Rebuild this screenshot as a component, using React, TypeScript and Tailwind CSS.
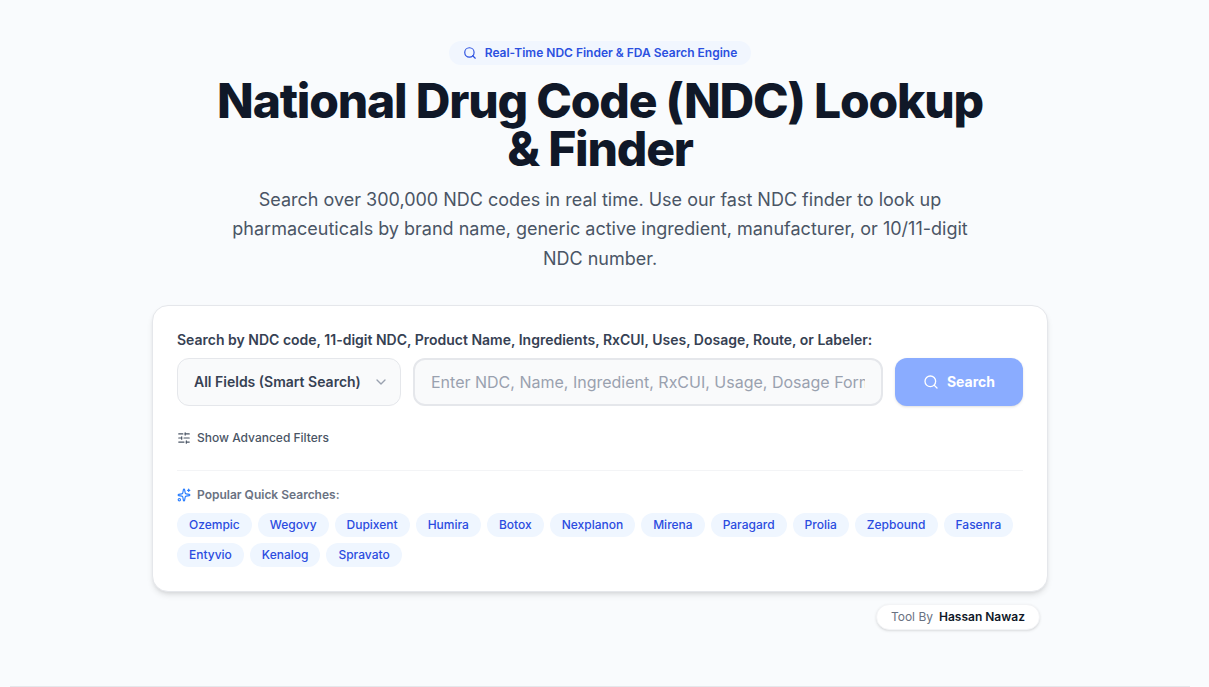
import { useState } from "react";
import { ChevronDown, Search, SlidersHorizontal, Sparkles } from "lucide-react";

const quickSearches = [
  "Ozempic",
  "Wegovy",
  "Dupixent",
  "Humira",
  "Botox",
  "Nexplanon",
  "Mirena",
  "Paragard",
  "Prolia",
  "Zepbound",
  "Fasenra",
  "Entyvio",
  "Kenalog",
  "Spravato",
];

function Hero() {
  return (
    <header className="flex flex-col items-center text-center">
      <p className="inline-flex items-center gap-2 rounded-full bg-[#f1f6fe] px-3.5 py-1 text-xs font-semibold text-[#2b50e0]">
        <Search className="size-3.5" aria-hidden="true" />
        Real-Time NDC Finder &amp; FDA Search Engine
      </p>
      <h1 className="mt-3 max-w-3xl text-5xl leading-none font-extrabold tracking-tight text-[#101828]">
        National Drug Code (NDC) Lookup &amp; Finder
      </h1>
      <p className="mt-3 max-w-3xl text-lg leading-relaxed text-[#4a5565]">
        Search over 300,000 NDC codes in real time. Use our fast NDC finder to look up pharmaceuticals by
        brand name, generic active ingredient, manufacturer, or 10/11-digit NDC number.
      </p>
    </header>
  );
}

function SearchCard() {
  const [query, setQuery] = useState("");
  return (
    <section className="w-full rounded-2xl border border-gray-200 bg-white p-6 shadow-md">
      <form onSubmit={(e) => e.preventDefault()}>
        <label htmlFor="query" className="block text-sm font-semibold text-[#364153]">
          Search by NDC code, 11-digit NDC, Product Name, Ingredients, RxCUI, Uses, Dosage, Route, or Labeler:
        </label>
        <div className="mt-2 flex flex-col gap-3 md:flex-row">
          <div className="relative md:w-56">
            <select
              aria-label="Search field"
              className="h-12 w-full appearance-none rounded-xl border border-gray-200 bg-[#f9fafb] pr-9 pl-4 text-sm font-semibold text-[#364153]"
            >
              <option>All Fields (Smart Search)</option>
              <option>NDC Code</option>
              <option>Product Name</option>
            </select>
            <ChevronDown
              className="pointer-events-none absolute top-4 right-3 size-4 text-gray-400"
              aria-hidden="true"
            />
          </div>
          <input
            id="query"
            type="text"
            value={query}
            onChange={(e) => setQuery(e.target.value)}
            placeholder="Enter NDC, Name, Ingredient, RxCUI, Usage, Dosage Form..."
            className="h-12 min-w-0 flex-1 rounded-xl border-2 border-gray-200 bg-[#f9fafb] px-4 text-base text-gray-900 placeholder:text-[#99a1af]"
          />
          <button
            type="submit"
            className="flex h-12 items-center justify-center gap-2 rounded-xl bg-[#8aacff] text-sm font-bold text-white shadow-sm md:w-32"
          >
            <Search className="size-4" aria-hidden="true" />
            Search
          </button>
        </div>
        <button type="button" className="mt-6 flex items-center gap-1.5 text-xs font-medium text-[#4a5565]">
          <SlidersHorizontal className="size-3.5" aria-hidden="true" />
          Show Advanced Filters
        </button>
      </form>
      <div className="mt-6 border-t border-gray-100 pt-4">
        <h2 className="flex items-center gap-1.5 text-xs font-semibold text-[#6a7282]">
          <Sparkles className="size-3.5 text-[#2b7fff]" aria-hidden="true" />
          Popular Quick Searches:
        </h2>
        <ul className="mt-2.5 flex flex-wrap gap-1.5">
          {quickSearches.map((name) => (
            <li key={name}>
              <button
                type="button"
                onClick={() => setQuery(name)}
                className="block rounded-full bg-[#eff6ff] px-3 py-1 text-xs font-medium text-[#2b4ce0]"
              >
                {name}
              </button>
            </li>
          ))}
        </ul>
      </div>
    </section>
  );
}

export default function App() {
  return (
    <div className="min-h-screen bg-[#f9fbfd] pr-[9px] font-['Inter',sans-serif]">
      <main className="mx-auto flex max-w-4xl flex-col items-center pt-[41px]">
        <Hero />
        <div className="mt-8 w-full">
          <SearchCard />
        </div>
        <p className="mt-3 mr-2 flex items-center gap-1.5 self-end rounded-full border border-gray-100 bg-white px-3.5 py-1 text-xs text-[#6a7282] shadow-sm">
          Tool By
          <a href="#author" className="font-semibold text-[#101828]">
            Hassan Nawaz
          </a>
        </p>
      </main>
      <hr className="mx-2.5 mt-14 border-gray-200" />
    </div>
  );
}
